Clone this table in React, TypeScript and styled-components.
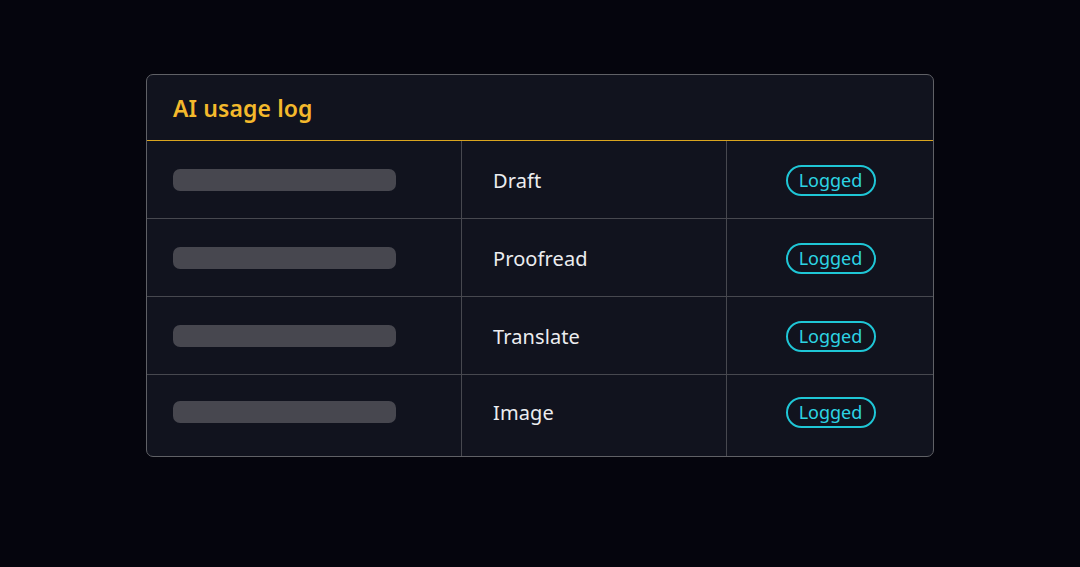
import React from "react";
import styled, { createGlobalStyle } from "styled-components";

const GlobalStyle = createGlobalStyle`
  html, body {
    margin: 0;
    padding: 0;
    background: #05050d;
    font-family: "Noto Sans", "Open Sans", sans-serif;
  }
`;

const Page = styled.div`
  width: 1080px;
  height: 567px;
  box-sizing: border-box;
  padding-top: 74px;
  display: flex;
  justify-content: center;
  align-items: flex-start;
`;

const Card = styled.div`
  width: 788px;
  box-sizing: border-box;
  background: #11131e;
  border: 1px solid #606166;
  border-radius: 7px;
  overflow: hidden;
`;

const Header = styled.div`
  height: 66px;
  box-sizing: border-box;
  padding-left: 26px;
  display: flex;
  align-items: center;
  border-bottom: 1.5px solid #d9a51f;
`;

const Title = styled.h2`
  margin: 0;
  font-size: 23px;
  font-weight: 600;
  color: #f4b92c;
  letter-spacing: 0.1px;
`;

const Row = styled.div<{ $last?: boolean }>`
  display: grid;
  grid-template-columns: 315px 265px 1fr;
  height: ${(p) => (p.$last ? "81px" : "78px")};
  border-bottom: ${(p) => (p.$last ? "none" : "1px solid #47484f")};
  box-sizing: border-box;
`;

const Cell = styled.div<{ $divider?: boolean; $center?: boolean; $last?: boolean }>`
  display: flex;
  align-items: center;
  justify-content: ${(p) => (p.$center ? "center" : "flex-start")};
  border-right: ${(p) => (p.$divider ? "1px solid #47484f" : "none")};
  padding-bottom: ${(p) => (p.$last ? "8px" : "0")};
  box-sizing: border-box;
`;

const BarCell = styled(Cell)`
  padding-left: 26px;
`;

const TextCell = styled(Cell)`
  padding-left: 31px;
`;

const Bar = styled.div`
  width: 223px;
  height: 22px;
  border-radius: 7px;
  background: #47474f;
`;

const Label = styled.span`
  font-size: 20px;
  color: #ecedf0;
  letter-spacing: 0.1px;
  margin-top: 1px;
`;

const Badge = styled.span`
  box-sizing: border-box;
  width: 90px;
  height: 31px;
  border: 2px solid #1fc6d6;
  border-radius: 16px;
  display: flex;
  align-items: center;
  justify-content: center;
  font-size: 18px;
  color: #2dd4e4;
  margin-left: 1px;
  margin-top: 2px;
  padding-bottom: 1px;
`;

const rows = ["Draft", "Proofread", "Translate", "Image"];

export default function App() {
  return (
    <>
      <GlobalStyle />
      <Page>
        <Card>
          <Header>
            <Title>AI usage log</Title>
          </Header>
          {rows.map((r, i) => {
            const last = i === rows.length - 1;
            return (
              <Row key={r} $last={last}>
                <BarCell $divider $last={last}>
                  <Bar />
                </BarCell>
                <TextCell $divider $last={last}>
                  <Label>{r}</Label>
                </TextCell>
                <Cell $center $last={last}>
                  <Badge>Logged</Badge>
                </Cell>
              </Row>
            );
          })}
        </Card>
      </Page>
    </>
  );
}
